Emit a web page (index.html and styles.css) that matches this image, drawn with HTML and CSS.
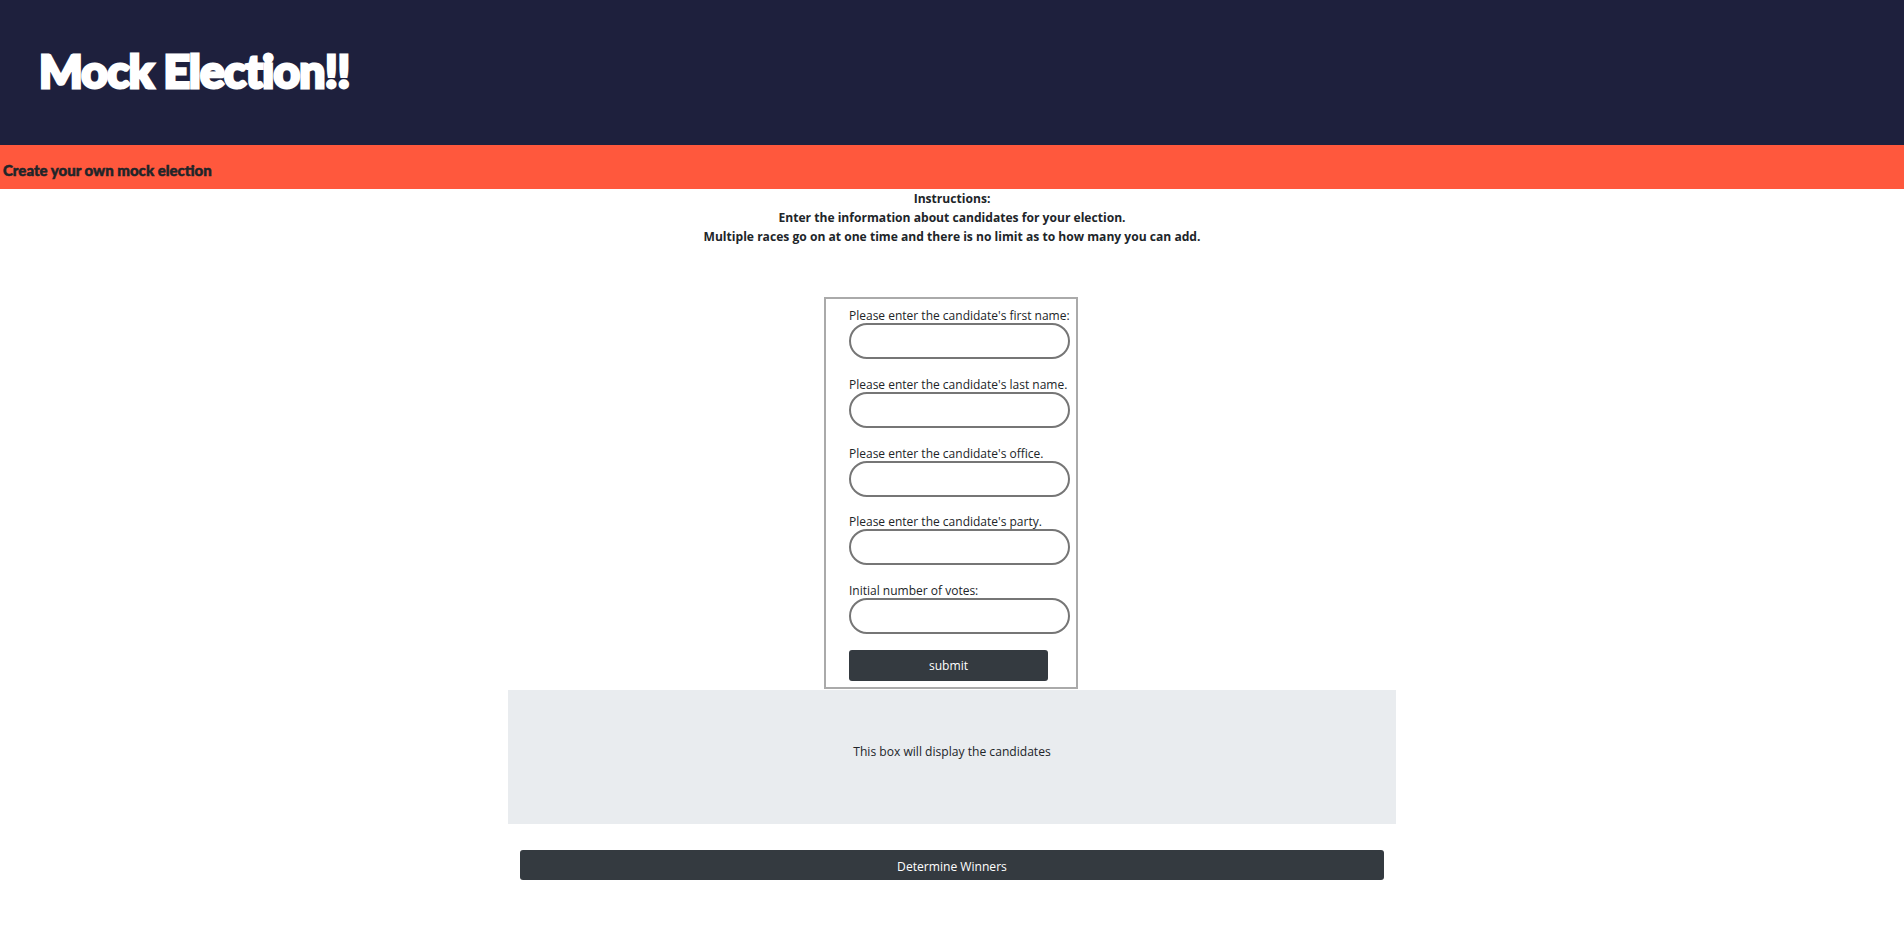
FILE: index.html
```html
<!DOCTYPE html>
<html lang="en">
<head>
<meta charset="utf-8">
<title>Mock Election</title>
<link rel="stylesheet" href="styles.css">
</head>
<body>
<header class="masthead"><h1 class="title">Mock Election!!</h1></header>
<div class="tagline">Create your own mock election</div>
<section class="instructions">
<p>Instructions:</p>
<p>Enter the information about candidates for your election.</p>
<p>Multiple races go on at one time and there is no limit as to how many you can add.</p>
</section>
<main class="content">
<form class="entry">
<label class="field">Please enter the candidate's first name:<input class="pill" type="text"></label>
<label class="field">Please enter the candidate's last name.<input class="pill" type="text"></label>
<label class="field">Please enter the candidate's office.<input class="pill" type="text"></label>
<label class="field">Please enter the candidate's party.<input class="pill" type="text"></label>
<label class="field">Initial number of votes:<input class="pill" type="text"></label>
<button class="btn submit" type="button">submit</button>
</form>
<div class="display">This box will display the candidates</div>
<button class="btn winners" type="button">Determine Winners</button>
</main>
</body>
</html>
```
FILE: styles.css
```css
* { box-sizing: border-box; }
body {
  margin: 0;
  background: #fff;
  color: #212529;
  font-family: "Open Sans", "Noto Sans", sans-serif;
  font-size: 12.1px;
  line-height: 19px;
}
.masthead {
  height: 145px;
  background: #1e203d;
  padding: 43px 0 0 39px;
}
.title {
  margin: 0;
  color: #fff;
  font-family: "Lato", sans-serif;
  font-weight: 900;
  font-size: 46px;
  line-height: 56px;
  letter-spacing: -0.7px;
  -webkit-text-stroke: 3px #fff;
}
.tagline {
  height: 44px;
  background: #ff583d;
  padding: 16px 0 0 3px;
  color: #212529;
  font-family: "Lato", sans-serif;
  font-weight: 900;
  font-size: 15px;
  line-height: 19px;
  -webkit-text-stroke: 0.5px #212529;
}
.instructions {
  height: 108px;
  text-align: center;
  font-weight: 700;
  color: #212529;
}
.instructions p { margin: 0; }
.content {
  width: 888px;
  margin: 0 auto;
  display: flex;
  flex-direction: column;
  align-items: center;
}
.entry {
  width: 254px;
  height: 392px;
  margin-left: -2px;
  border: 2px solid #aaa;
  padding: 9px 6px 0 23px;
  display: flex;
  flex-direction: column;
}
.field {
  display: block;
  height: 68.75px;
  white-space: nowrap;
  font-size: 12px;
  line-height: 15px;
}
.pill {
  display: block;
  width: 221px;
  height: 36px;
  border: 2px solid #767676;
  border-radius: 18px;
  background: #fff;
}
.btn {
  display: block;
  border: 0;
  border-radius: 3px;
  background: #343a40;
  color: #fff;
  font-family: inherit;
  font-size: 12.1px;
  padding: 1px 0 0;
}
.submit {
  width: 199px;
  height: 31px;
  margin-top: -2px;
}
.display {
  width: 888px;
  height: 134px;
  margin-top: 1px;
  padding-top: 52px;
  background: #e9ecef;
  text-align: center;
}
.winners {
  width: 864px;
  height: 30px;
  margin-top: 26px;
  padding-top: 2px;
}
```
